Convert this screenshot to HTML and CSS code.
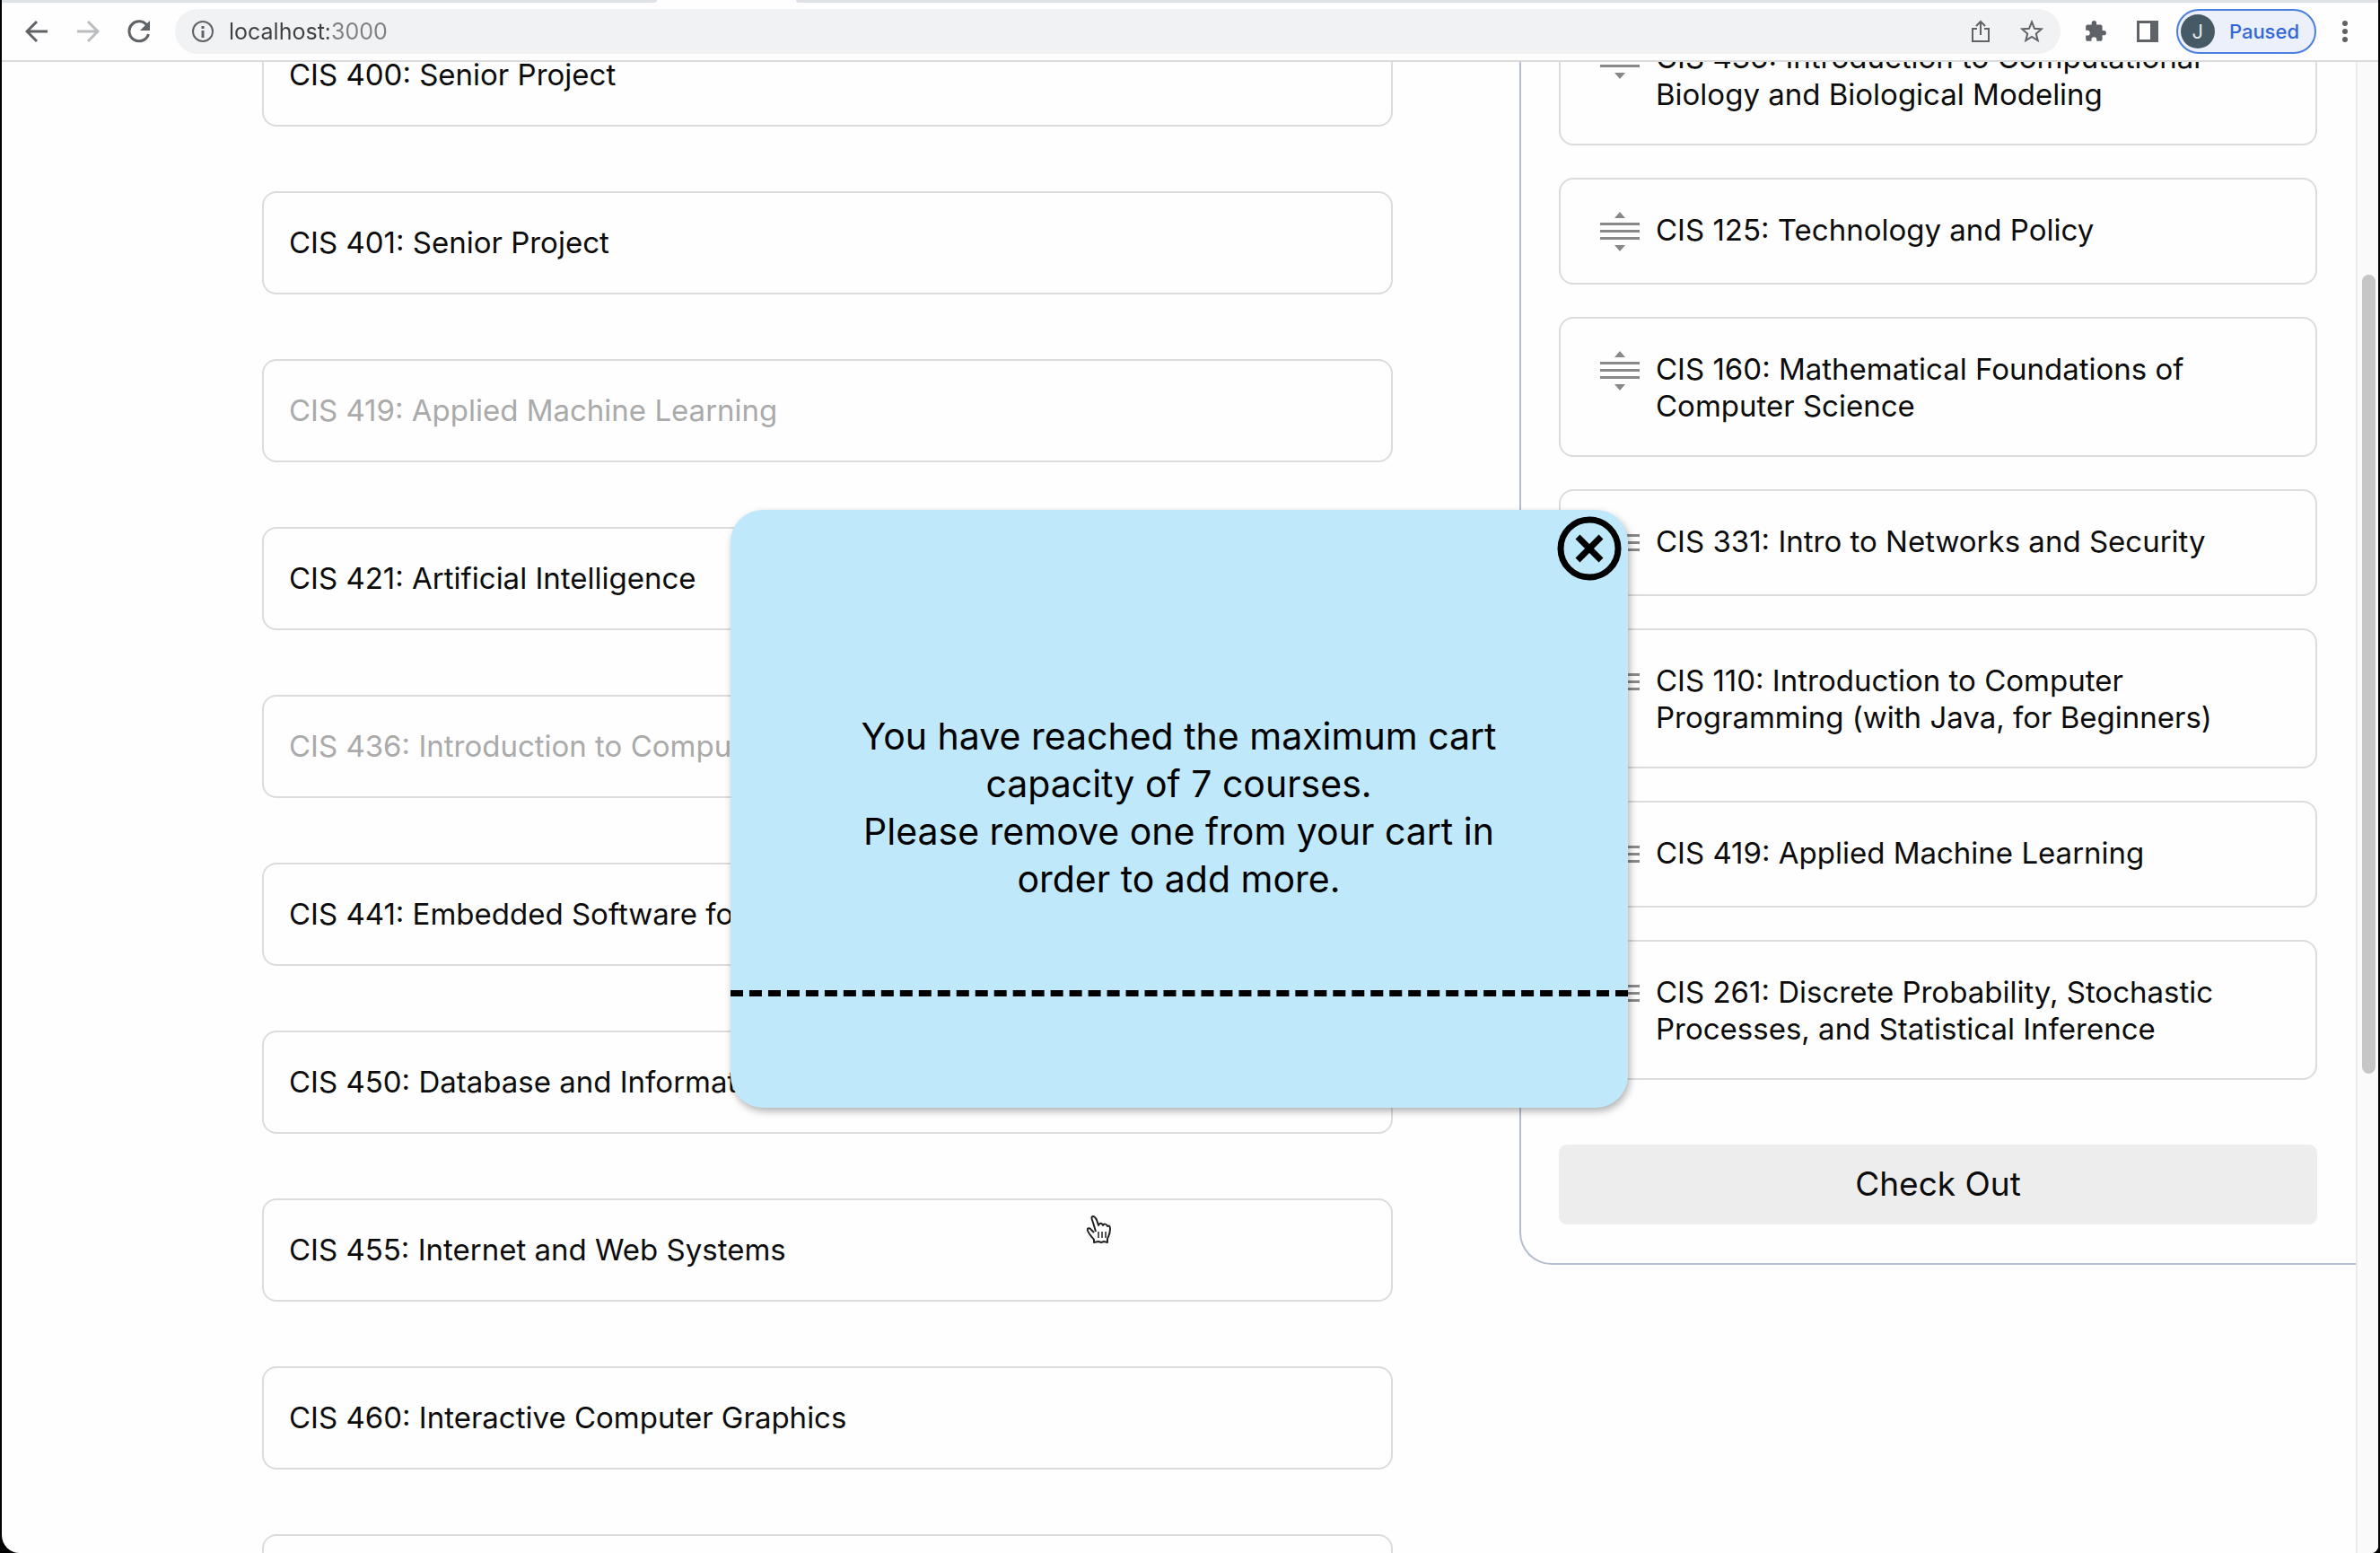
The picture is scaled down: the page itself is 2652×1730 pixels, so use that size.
FILE: index.html
```html
<!DOCTYPE html>
<html lang="en">
<head>
<meta charset="utf-8">
<title>Course Cart</title>
<link rel="stylesheet" href="styles.css">
</head>
<body>
<svg class="defs" aria-hidden="true">
  <symbol id="drag" viewBox="0 0 44 44">
    <path d="M22 0l6 7H16zM22 44l6-7H16zM0 12h44v3H0zM0 20h44v3H0zM0 28h44v3H0z"/>
  </symbol>
</svg>
<div class="window">
  <div class="tabs"><span class="tab-left"></span><span class="tab-right"></span></div>
  <header class="toolbar">
    <nav class="history">
      <button class="icon" aria-label="Back"><svg width="26" height="26" viewBox="0 0 26 26"><path d="M25 13H3M13 2L2 13l11 11" fill="none" stroke="#5f6368" stroke-width="3"/></svg></button>
      <button class="icon" aria-label="Forward"><svg width="26" height="26" viewBox="0 0 26 26"><path d="M1 13h22M13 2l11 11-11 11" fill="none" stroke="#babcbe" stroke-width="3"/></svg></button>
      <button class="icon" aria-label="Reload"><svg width="26" height="26" viewBox="0 0 26 26"><path d="M22 6.500A11 11 0 1 0 23.500 16" fill="none" stroke="#5f6368" stroke-width="3"/><path d="M25 1v11H14z" fill="#5f6368"/></svg></button>
    </nav>
    <div class="address">
      <svg width="26" height="26" viewBox="0 0 26 26"><circle cx="13" cy="13" r="11" fill="none" stroke="#5f6368" stroke-width="2"/><path d="M11.500 7h3v3h-3zM11.500 12h3v8h-3z" fill="#5f6368"/></svg>
      <input class="url" type="text" value="localhost:3000" aria-label="Address">
      <button class="icon share" aria-label="Share"><svg width="26" height="26" viewBox="0 0 26 26"><path d="M9 10H4v14h18V10h-5M13 17V3M8 7l5-5 5 5" fill="none" stroke="#5f6368" stroke-width="2"/></svg></button>
      <button class="icon" aria-label="Bookmark"><svg width="26" height="26" viewBox="0 0 26 26"><path d="M13 2.500l3 7.300 7.800.6-6 5.100 1.900 7.700-6.700-4.200-6.700 4.200 1.900-7.700-6-5.100 7.800-.6z" fill="none" stroke="#5f6368" stroke-width="2"/></svg></button>
    </div>
    <div class="tools">
      <button class="icon" aria-label="Extensions"><svg width="26" height="26" viewBox="0 0 24 24"><path d="M20.500 11H19V7c0-1.100-.9-2-2-2h-4V3.500a2.500 2.500 0 0 0-5 0V5H4c-1.100 0-2 .9-2 2v3.800h1.500a2.700 2.700 0 0 1 0 5.400H2V20c0 1.100.9 2 2 2h3.800v-1.500a2.700 2.700 0 0 1 5.400 0V22H17c1.100 0 2-.9 2-2v-4h1.500a2.500 2.500 0 0 0 0-5z" fill="#5f6368"/></svg></button>
      <button class="icon" aria-label="Side panel"><svg width="26" height="26" viewBox="0 0 26 26"><path d="M1 1h24v24H1zM4 4v18h12V4z" fill="#5f6368" fill-rule="evenodd"/></svg></button>
      <button class="profile"><span class="avatar">J</span>Paused</button>
      <button class="icon more" aria-label="Menu"><svg width="6" height="26" viewBox="0 0 6 26"><g fill="#5f6368"><circle cx="3" cy="4" r="3"/><circle cx="3" cy="13" r="3"/><circle cx="3" cy="22" r="3"/></g></svg></button>
    </div>
  </header>
  <div class="viewport">
    <main class="page">
      <ul class="catalog">
        <li><button class="course">CIS 400: Senior Project</button></li>
        <li><button class="course">CIS 401: Senior Project</button></li>
        <li><button class="course" disabled>CIS 419: Applied Machine Learning</button></li>
        <li><button class="course">CIS 421: Artificial Intelligence</button></li>
        <li><button class="course" disabled>CIS 436: Introduction to Computational Biology and Biological Modeling</button></li>
        <li><button class="course">CIS 441: Embedded Software for Life-Critical Applications</button></li>
        <li><button class="course">CIS 450: Database and Information Systems</button></li>
        <li><button class="course">CIS 455: Internet and Web Systems</button></li>
        <li><button class="course">CIS 460: Interactive Computer Graphics</button></li>
        <li><button class="course" aria-label="Next course"></button></li>
      </ul>
      <section class="cart">
        <ul class="cart-list">
          <li class="cart-item"><svg class="drag"><use href="#drag"/></svg><span>CIS 436: Introduction to Computational Biology and Biological Modeling</span></li>
          <li class="cart-item"><svg class="drag"><use href="#drag"/></svg><span>CIS 125: Technology and Policy</span></li>
          <li class="cart-item"><svg class="drag"><use href="#drag"/></svg><span>CIS 160: Mathematical Foundations of Computer Science</span></li>
          <li class="cart-item"><svg class="drag"><use href="#drag"/></svg><span>CIS 331: Intro to Networks and Security</span></li>
          <li class="cart-item"><svg class="drag"><use href="#drag"/></svg><span>CIS 110: Introduction to Computer Programming (with Java, for Beginners)</span></li>
          <li class="cart-item"><svg class="drag"><use href="#drag"/></svg><span>CIS 419: Applied Machine Learning</span></li>
          <li class="cart-item"><svg class="drag"><use href="#drag"/></svg><span>CIS 261: Discrete Probability, Stochastic Processes, and Statistical Inference</span></li>
        </ul>
        <button class="checkout">Check Out</button>
      </section>
    </main>
    <div class="scrollbar"><div class="thumb"></div></div>
    <div class="overlay">
      <div class="modal" role="dialog" aria-label="Cart is full">
        <button class="close" aria-label="Close"><svg width="72" height="72" viewBox="0 0 72 72" fill="none" stroke="#000"><circle cx="36" cy="36" r="32" stroke-width="7"/><path d="M23 23l26 26M49 23L23 49" stroke-width="7"/></svg></button>
        <p class="message">You have reached the maximum cart capacity of 7 courses.<br>Please remove one from your cart in order to add more.</p>
        <hr class="divider">
      </div>
    </div>
    <svg class="pointer" width="28" height="32" viewBox="0 0 28 32"><path d="M11 18L8 8C6 3 6 1 8 1s3 2 4 4l2 6c1-3 4-3 5 0 1-2 4-2 5 1 2-1 3 0 3 3 0 6-2 8-3 11v4l-4-1-3 1-3-1-5 1v-3c-2-3-5-5-7-10-1-3 2-4 4-1l3 3" fill="#fff" stroke="#222" stroke-width="2" stroke-linejoin="round"/><path d="M14 18v7M18 18v7M22 18v7" stroke="#222" stroke-width="1.500"/></svg>
  </div>
</div>
</body>
</html>
```
FILE: styles.css
```css
* { box-sizing: border-box; }

body {
  margin: 0;
  background: #000;
  color: #0c0c0c;
  font: 33px/41px Inter, "Liberation Sans", sans-serif;
}

button, input { font: inherit; color: inherit; border: 0; padding: 0; background: none; }
ul { list-style: none; margin: 0; padding: 0; }
svg { display: block; flex: none; }
.defs { position: absolute; width: 0; height: 0; }

.window {
  display: flex;
  flex-direction: column;
  height: 100vh;
  margin: 0 2px;
  overflow: hidden;
  background: #fefefe;
  border-radius: 0 0 8px 20px;
}

/* Browser bar */
.tabs { display: flex; gap: 155px; height: 3px; flex: none; }
.tab-left { width: 730px; background: #dee1e6; border-bottom-right-radius: 3px; }
.tab-right { flex: 1; background: #dee1e6; border-bottom-left-radius: 3px; }

.toolbar {
  display: flex;
  align-items: center;
  flex: none;
  height: 66px;
  padding: 0 34px 0 26px;
  border-bottom: 2px solid #dcdcdc;
}
.history { display: flex; gap: 31px; margin-right: 27px; }
.address {
  display: flex;
  align-items: center;
  flex: 1;
  height: 50px;
  padding: 0 19px 0 18px;
  border-radius: 25px;
  background: #f1f2f4;
}
.url {
  flex: 1;
  min-width: 0;
  margin-left: 16px;
  font-size: 25px;
  line-height: 32px;
  background: linear-gradient(90deg, #3c4043 111px, #7d8084 111px);
  -webkit-background-clip: text;
  background-clip: text;
  -webkit-text-fill-color: transparent;
}
.share { margin-right: 31px; }
.tools { display: flex; align-items: center; margin-left: 26px; }
.tools .icon { margin-right: 32px; }
.profile {
  display: flex;
  align-items: center;
  gap: 16px;
  height: 50px;
  margin-left: -13px;
  padding: 0 17px 0 3px;
  border: 2px solid #4a7fdc;
  border-radius: 25px;
  background: #ebf0fa;
  color: #3367d6;
  font-size: 22px;
  line-height: 32px;
  font-weight: 500;
}
.avatar {
  width: 38px;
  height: 38px;
  border-radius: 50%;
  background: #455a64;
  color: #e4e8ea;
  line-height: 38px;
  text-align: center;
  font-weight: 400;
}
.tools .more { margin: 0 0 0 29px; }

/* Scrolled page */
.viewport { position: relative; display: flex; flex: 1; min-height: 0; }
.page {
  display: grid;
  grid-template-columns: 1260fr 932fr;
  align-items: start;
  gap: 141px;
  flex: 1;
  height: 100%;
  padding-left: 290px;
  overflow: hidden;
}
.catalog { display: grid; gap: 72px; margin-top: -43px; }
.course {
  display: block;
  width: 100%;
  min-height: 115px;
  padding: 35px 28px;
  border: 2px solid #dcdcdc;
  border-radius: 16px;
  text-align: left;
}
.course:disabled { color: #aaa; }

.cart {
  margin-top: -80px;
  padding: 17px 43px 43px 42px;
  border: 2px solid #b4bccf;
  border-width: 0 0 2px 2px;
  border-radius: 0 0 0 36px;
}
.cart-list { display: grid; gap: 36px; }
.cart-item {
  display: flex;
  align-items: flex-start;
  gap: 18px;
  min-height: 119px;
  padding: 36px 44px 34px;
  border: 2px solid #dcdcdc;
  border-radius: 16px;
}
.drag { width: 44px; height: 44px; fill: #888; }
.checkout {
  display: block;
  width: 100%;
  height: 89px;
  margin-top: 72px;
  padding-bottom: 3px;
  border-radius: 9px;
  background: #ededed;
  font-size: 37px;
}

.scrollbar {
  width: 25px;
  padding: 237px 3px 0 5px;
  border-left: 2px solid #ebebeb;
  background: #fafafa;
}
.thumb { width: 15px; height: 890px; border-radius: 8px; background: #c6c6c6; }

/* Dialog */
.overlay {
  position: absolute;
  inset: 0 25px 0 0;
  display: grid;
  place-items: center;
  padding-top: 3px;
}
.modal {
  position: relative;
  width: 1000px;
  padding: 226px 0 124px;
  border-radius: 36px;
  background: #bfe9fb;
  box-shadow: 2px 4px 8px rgba(0, 0, 0, .3);
}
.close { position: absolute; top: 7px; right: 7px; }
.message {
  margin: 0 134px 97px;
  color: #000;
  font-size: 41px;
  line-height: 53px;
  text-align: center;
}
.divider { margin: 0; border: 0; border-top: 7px dashed #000; }

.pointer { position: absolute; left: 1208px; top: 1285px; }
```
